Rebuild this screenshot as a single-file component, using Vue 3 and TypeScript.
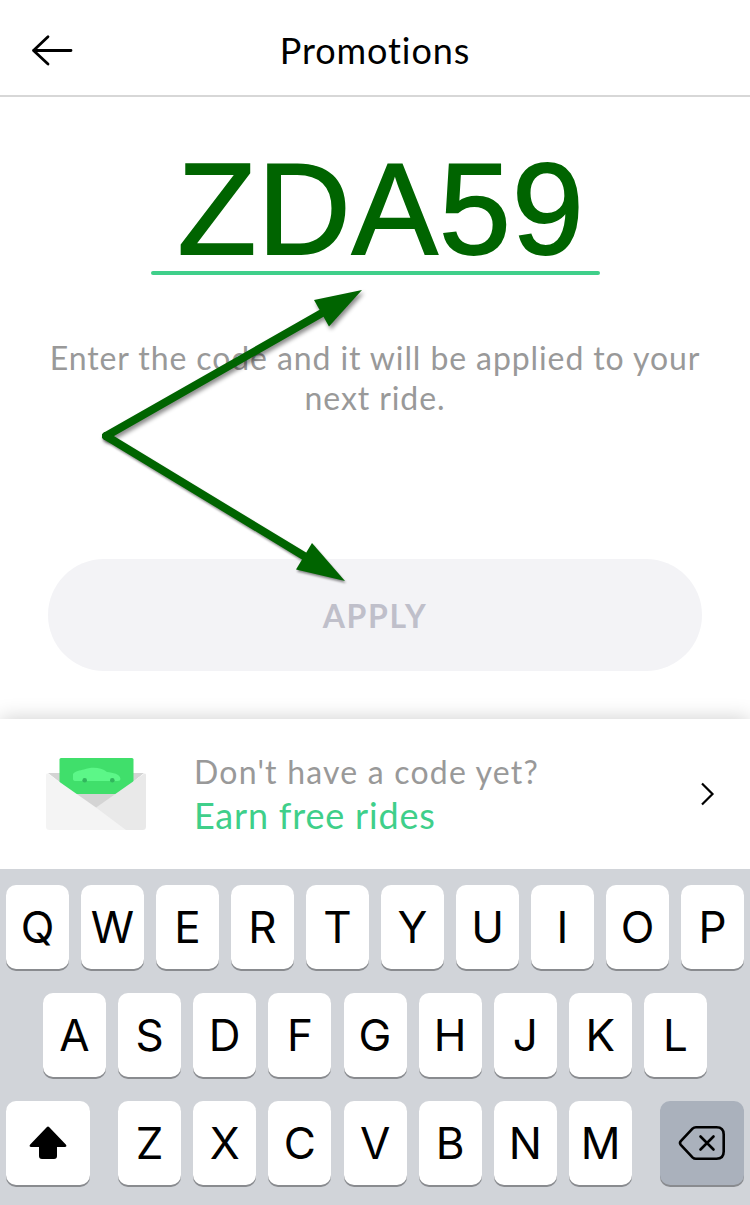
<script setup lang="ts">
const topRow: string[] = [...'QWERTYUIOP']
const middleRow: string[] = [...'ASDFGHJKL']
const bottomRow: string[] = [...'ZXCVBNM']
</script>

<template>
  <main class="screen">
    <header class="header">
      <button class="back" aria-label="Back">
        <svg width="42" height="32" viewBox="0 0 42 32">
          <path d="M17 2.800 2.500 16.500 17 30M2.500 16.500H40" />
        </svg>
      </button>
      <h1 class="title">Promotions</h1>
    </header>

    <section class="promo">
      <div class="code">ZDA59</div>
      <div class="underline"></div>
      <p class="hint">
        <span class="line">Enter the code and it will be applied to your</span>
        <span class="line">next ride.</span>
      </p>
      <button class="apply"><span>APPLY</span></button>

      <svg class="arrows" width="280" height="310" viewBox="90 280 280 310">
        <g class="arrow">
          <path class="shaft" d="M106 436 322 313" />
          <path class="tip" d="M362 290 314 300 329 326.500Z" />
        </g>
        <g class="arrow low">
          <path class="shaft" d="M106 436 304 556" />
          <path class="tip" d="M345 581 312 543 296 569.500Z" />
        </g>
      </svg>
    </section>

    <section class="invite">
      <svg class="envelope" width="100" height="74" viewBox="46 757 100 74">
        <path fill="#d4d4d4" d="M48 773H144L97 811Z" />
        <path fill="#40df6b" d="M61 758H132Q133.500 758 133.500 759.500V783L118 794H75L59.500 783V759.500Q59.500 758 61 758Z" />
        <path fill="#5cf788" d="M73 774C75 771 80 770.500 84 769.500C91 767 101 767 107 772C113 773 120 773.500 120.500 779Q120.500 781 118 781H75Q72.500 781 73 777Z" />
        <circle cx="84.700" cy="780.300" r="2.300" fill="#31b65d" />
        <circle cx="112.300" cy="780.300" r="2.300" fill="#31b65d" />
        <path fill="#e9e9e9" d="M144.500 773.500Q146 773 146 775V826.500Q146 830 142.500 830H118L94 809Z" />
        <path fill="#f4f4f4" d="M47.500 773.500 96 807.500 126 830H49.500Q46 830 46 826.500V775Q46 773 47.500 773.500Z" />
      </svg>
      <div class="invite-text">
        <div class="question">Don't have a code yet?</div>
        <div class="earn">Earn free rides</div>
      </div>
      <svg class="chevron" width="15" height="24" viewBox="0 0 15 24">
        <path d="M2 1.500 12.500 12 2 22.500" />
      </svg>
    </section>

    <section class="keyboard">
      <div class="row">
        <button v-for="k in topRow" :key="k" class="key">{{ k }}</button>
      </div>
      <div class="row middle">
        <button v-for="k in middleRow" :key="k" class="key">{{ k }}</button>
      </div>
      <div class="row">
        <button class="key wide" aria-label="Shift">
          <svg width="38" height="34" viewBox="0 0 38 34">
            <path d="M17.700 1.200Q19 0 20.300 1.200L36.800 18.500Q38.500 21 35.500 21H28V30Q28 33 25 33H13Q10 33 10 30V21H2.500Q-.5 21 1.200 18.500Z" />
          </svg>
        </button>
        <div class="letters">
          <button v-for="k in bottomRow" :key="k" class="key">{{ k }}</button>
        </div>
        <button class="key wide dark" aria-label="Delete">
          <svg class="erase" width="48" height="36" viewBox="0 0 48 36">
            <path d="M18 2.200H38.500Q45.700 2.200 45.700 9.400V26.600Q45.700 33.800 38.500 33.800H18Q16 33.800 14.500 32.300L2.800 19.800Q1.200 18 2.800 16.200L14.500 3.700Q16 2.200 18 2.200Z" />
            <path d="M22.500 11.500 35.500 24.500M35.500 11.500 22.500 24.500" />
          </svg>
        </button>
      </div>
    </section>
  </main>
</template>

<style>
body {
  margin: 0;
}
</style>

<style scoped>
.screen {
  position: relative;
  width: 750px;
  height: 1205px;
  overflow: hidden;
  display: flex;
  flex-direction: column;
  background: #fff;
  font-family: Lato, "Liberation Sans", sans-serif;
}
button {
  border: 0;
  padding: 0;
  margin: 0;
  font: inherit;
  color: inherit;
  background: none;
}
svg {
  display: block;
}
.header {
  box-sizing: border-box;
  height: 97px;
  flex: none;
  display: grid;
  grid-template-columns: 100px 1fr 100px;
  align-items: start;
  border-bottom: 2px solid #d7d7d7;
}
.back {
  padding: 34px 0 0 31px;
  justify-self: start;
}
.back path {
  fill: none;
  stroke: #000;
  stroke-width: 2.8;
  stroke-linecap: round;
  stroke-linejoin: round;
}
.title {
  margin: 28px 0 0;
  text-align: center;
  font-size: 36px;
  line-height: 44px;
  font-weight: 400;
  letter-spacing: 0.9px;
  white-space: nowrap;
}
.promo {
  height: 622px;
  flex: none;
  display: flex;
  flex-direction: column;
  align-items: center;
}
.code {
  box-sizing: border-box;
  width: 449px;
  height: 174px;
  padding: 37px 0 0 27px;
  font: 129px/150px "Liberation Sans", Arial, sans-serif;
  letter-spacing: 1.2px;
  color: #006400;
  -webkit-text-stroke: 1.8px #006400;
  white-space: nowrap;
}
.underline {
  width: 449px;
  height: 4px;
  border-radius: 2px;
  background: #3fcf8a;
}
.hint {
  margin: 63px 0 0;
  font-size: 32px;
  line-height: 40px;
  color: #999;
  text-align: center;
  letter-spacing: 0.9px;
}
.line {
  display: block;
  white-space: nowrap;
}
.apply {
  width: 654px;
  height: 112px;
  margin-top: 141px;
  border-radius: 56px;
  background: #f3f3f6;
  color: #bfbfca;
  font-size: 32px;
  font-weight: 700;
  letter-spacing: 1.7px;
}
.arrows {
  position: absolute;
  left: 90px;
  top: 280px;
}
.arrow {
  filter: drop-shadow(2px 3px 2px rgba(0, 0, 0, 0.45));
}
.low {
  filter: drop-shadow(1px 2px 1px rgba(0, 0, 0, 0.45));
}
.shaft {
  fill: none;
  stroke: #006400;
  stroke-width: 8;
  stroke-linecap: round;
}
.tip {
  fill: #006400;
}
.invite {
  position: relative;
  box-sizing: border-box;
  height: 150px;
  flex: none;
  display: flex;
  align-items: center;
  padding: 0 35px 0 46px;
  background: #fff;
  box-shadow: 0 0 20px rgba(0, 0, 0, 0.2);
}
.invite-text {
  margin-left: 48px;
  flex: 1;
  white-space: nowrap;
}
.question {
  font-size: 32px;
  line-height: 42px;
  color: #999;
  letter-spacing: 1.2px;
}
.earn {
  font-size: 36px;
  line-height: 44px;
  color: #3fcf8a;
  letter-spacing: 0.8px;
}
.chevron path {
  fill: none;
  stroke: #000;
  stroke-width: 2.2;
}
.keyboard {
  position: relative;
  box-sizing: border-box;
  flex: 1;
  display: flex;
  flex-direction: column;
  gap: 24px;
  padding: 16px 6px 0;
  background: #d1d4d9;
}
.row {
  display: flex;
  justify-content: space-between;
}
.middle {
  padding: 0 37px;
}
.letters {
  width: 514px;
  padding-left: 0.2px;
  display: flex;
  justify-content: space-between;
}
.key {
  width: 63px;
  height: 84px;
  display: flex;
  align-items: center;
  justify-content: center;
  border-radius: 10px;
  background: #fff;
  box-shadow: 0 2px 0 #898b8f;
  font: 400 44px/84px Inter, "Liberation Sans", sans-serif;
  color: #000;
}
.wide {
  width: 84px;
}
.dark {
  background: #aab1bc;
}
.erase path {
  fill: none;
  stroke: #000;
  stroke-width: 2.6;
  stroke-linecap: round;
}
</style>
